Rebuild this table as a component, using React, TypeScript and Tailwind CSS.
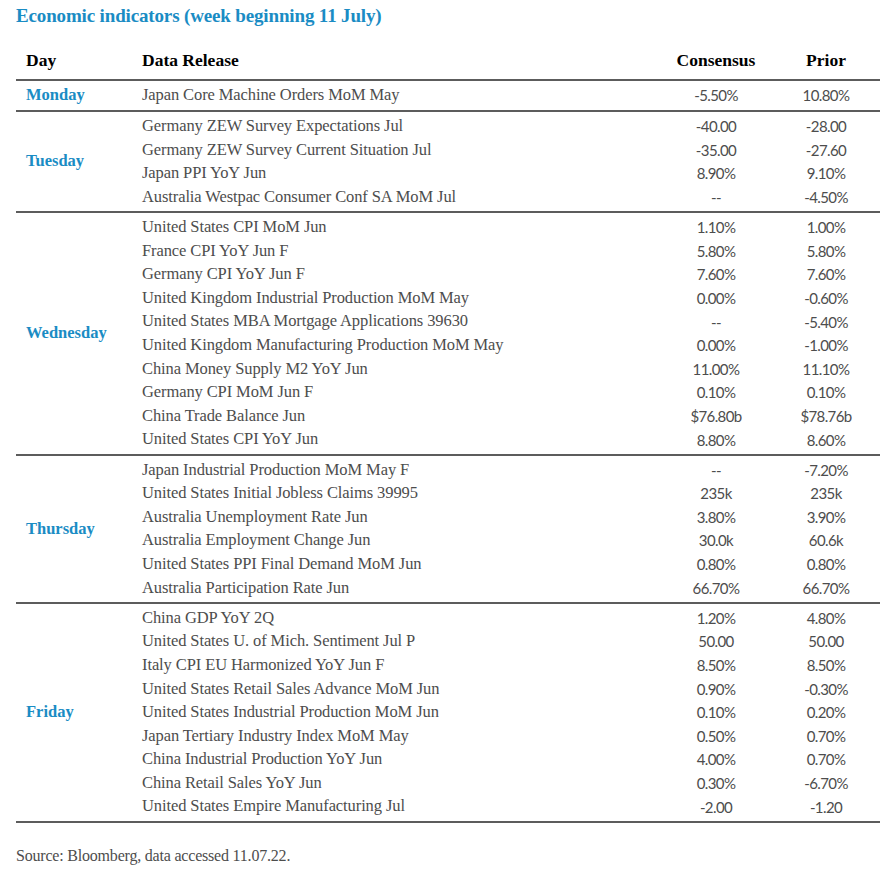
import React from "react"

type Row = [string, string, string]

const GROUPS: { day: string; rows: Row[] }[] = [
  { day: "Monday", rows: [["Japan Core Machine Orders MoM May", "-5.50%", "10.80%"]] },
  {
    day: "Tuesday",
    rows: [
      ["Germany ZEW Survey Expectations Jul", "-40.00", "-28.00"],
      ["Germany ZEW Survey Current Situation Jul", "-35.00", "-27.60"],
      ["Japan PPI YoY Jun", "8.90%", "9.10%"],
      ["Australia Westpac Consumer Conf SA MoM Jul", "--", "-4.50%"],
    ],
  },
  {
    day: "Wednesday",
    rows: [
      ["United States CPI MoM Jun", "1.10%", "1.00%"],
      ["France CPI YoY Jun F", "5.80%", "5.80%"],
      ["Germany CPI YoY Jun F", "7.60%", "7.60%"],
      ["United Kingdom Industrial Production MoM May", "0.00%", "-0.60%"],
      ["United States MBA Mortgage Applications 39630", "--", "-5.40%"],
      ["United Kingdom Manufacturing Production MoM May", "0.00%", "-1.00%"],
      ["China Money Supply M2 YoY Jun", "11.00%", "11.10%"],
      ["Germany CPI MoM Jun F", "0.10%", "0.10%"],
      ["China Trade Balance Jun", "$76.80b", "$78.76b"],
      ["United States CPI YoY Jun", "8.80%", "8.60%"],
    ],
  },
  {
    day: "Thursday",
    rows: [
      ["Japan Industrial Production MoM May F", "--", "-7.20%"],
      ["United States Initial Jobless Claims 39995", "235k", "235k"],
      ["Australia Unemployment Rate Jun", "3.80%", "3.90%"],
      ["Australia Employment Change Jun", "30.0k", "60.6k"],
      ["United States PPI Final Demand MoM Jun", "0.80%", "0.80%"],
      ["Australia Participation Rate Jun", "66.70%", "66.70%"],
    ],
  },
  {
    day: "Friday",
    rows: [
      ["China GDP YoY 2Q", "1.20%", "4.80%"],
      ["United States U. of Mich. Sentiment Jul P", "50.00", "50.00"],
      ["Italy CPI EU Harmonized YoY Jun F", "8.50%", "8.50%"],
      ["United States Retail Sales Advance MoM Jun", "0.90%", "-0.30%"],
      ["United States Industrial Production MoM Jun", "0.10%", "0.20%"],
      ["Japan Tertiary Industry Index MoM May", "0.50%", "0.70%"],
      ["China Industrial Production YoY Jun", "4.00%", "0.70%"],
      ["China Retail Sales YoY Jun", "0.30%", "-6.70%"],
      ["United States Empire Manufacturing Jul", "-2.00", "-1.20"],
    ],
  },
]

const serif = "font-['Liberation_Serif',serif]"
const nums = "font-['Lato',sans-serif] tracking-[-0.6px]"

export default function App() {
  return (
    <div className="w-[889px] h-[872px] bg-white pl-4 pt-[4px]">
      <h1 className={`${serif} text-[19px] leading-6 font-bold text-[#1a8cc4] tracking-[-0.15px]`}>
        Economic indicators (week beginning 11 July)
      </h1>

      <div className="w-[864px] mt-[19px]">
        <div className={`${serif} flex items-center h-[27px] text-[17.5px] font-bold text-black border-b-2 border-[#5c5c5c] box-content pb-[5px]`}>
          <div className="w-[126px] pl-[10px]">Day</div>
          <div className="flex-1">Data Release</div>
          <div className="w-[112px] text-center">Consensus</div>
          <div className="w-[108px] text-center">Prior</div>
        </div>

        {GROUPS.map(g => (
          <div key={g.day} className="flex items-center border-b-2 border-[#5c5c5c] py-[2.3px]">
            <div className={`${serif} w-[126px] pl-[10px] text-[16.5px] font-bold text-[#1a8cc4]`}>{g.day}</div>
            <div className="flex-1">
              {g.rows.map(([name, cons, prior]) => (
                <div key={name} className="flex items-center h-[23.6px] text-[#4d4d4d]">
                  <div className={`${serif} flex-1 text-[16.5px] tracking-[-0.1px]`}>{name}</div>
                  <div className={`${nums} w-[112px] text-center text-[15px]`}>{cons}</div>
                  <div className={`${nums} w-[108px] text-center text-[15px]`}>{prior}</div>
                </div>
              ))}
            </div>
          </div>
        ))}
      </div>

      <p className={`${serif} mt-[21px] text-[16px] text-[#4d4d4d] tracking-[-0.2px]`}>
        Source: Bloomberg, data accessed 11.07.22.
      </p>
    </div>
  )
}
